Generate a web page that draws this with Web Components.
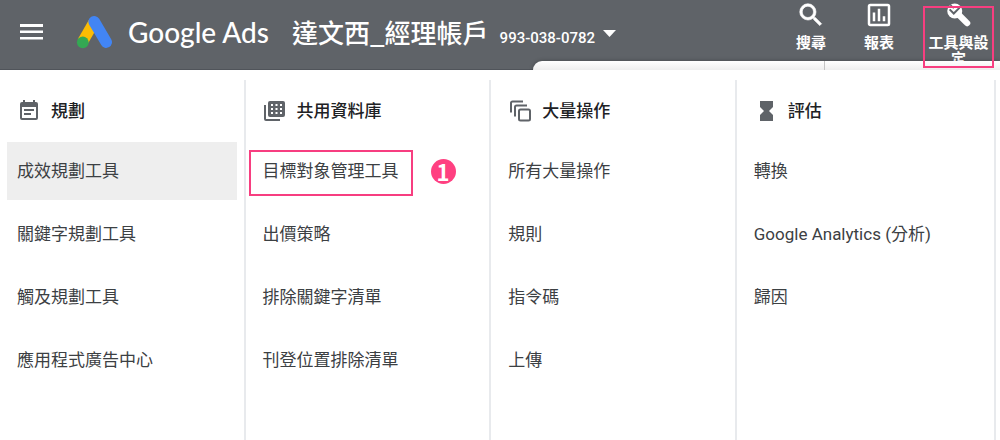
<!DOCTYPE html>
<html lang="zh-Hant">
<head>
  <meta charset="utf-8">
  <title>Google Ads</title>
  <style>
    body {
      margin: 0;
      background: #fff;
      color: #3c4043;
      font-family: Roboto, "Noto Sans CJK TC", sans-serif;
      font-size: 17px;
    }
  </style>
</head>
<body>
  <ads-page>
    <ads-header slot="header" account="達文西_經理帳戶" account-id="993-038-0782">
      <ads-tool icon="search">搜尋</ads-tool>
      <ads-tool icon="report">報表</ads-tool>
      <ads-tool icon="wrench" marked>工具與設定</ads-tool>
    </ads-header>
    <menu-column icon="plan" heading="規劃">
      <menu-item active>成效規劃工具</menu-item>
      <menu-item>關鍵字規劃工具</menu-item>
      <menu-item>觸及規劃工具</menu-item>
      <menu-item>應用程式廣告中心</menu-item>
    </menu-column>
    <menu-column icon="library" heading="共用資料庫">
      <menu-item step="1">目標對象管理工具</menu-item>
      <menu-item>出價策略</menu-item>
      <menu-item>排除關鍵字清單</menu-item>
      <menu-item>刊登位置排除清單</menu-item>
    </menu-column>
    <menu-column icon="bulk" heading="大量操作">
      <menu-item>所有大量操作</menu-item>
      <menu-item>規則</menu-item>
      <menu-item>指令碼</menu-item>
      <menu-item>上傳</menu-item>
    </menu-column>
    <menu-column icon="measure" heading="評估">
      <menu-item>轉換</menu-item>
      <menu-item>Google Analytics (分析)</menu-item>
      <menu-item>歸因</menu-item>
    </menu-column>
  </ads-page>

  <script>
    (function () {
      var icons = {
        search: '<path d="M15.5 14h-.79l-.28-.27A6.47 6.47 0 0 0 16 9.5 6.5 6.5 0 1 0 9.5 16c1.61 0 3.09-.59 4.23-1.57l.27.28v.79l5 4.99L20.49 19l-4.99-5zm-6 0a4.5 4.5 0 1 1 0-9 4.5 4.5 0 0 1 0 9z" stroke="currentColor" stroke-width=".5"/>',
        report: '<path d="M19 3H5a2 2 0 0 0-2 2v14c0 1.1.9 2 2 2h14a2 2 0 0 0 2-2V5a2 2 0 0 0-2-2zm0 16H5V5h14v14zM7 10h2v7H7zm4-3h2v10h-2zm4 6h2v4h-2z" fill-rule="evenodd"/>',
        wrench: '<path d="M9 9l9.500 9.500" stroke="currentColor" stroke-width="5" stroke-linecap="round"/><circle cx="8.6" cy="8.8" r="6"/><path d="M4.500 7.500l3.300 3.300 4.700-4.700" fill="none" stroke="#5f6368" stroke-width="1.6"/><path d="M5.200 4l2.600 2.600" stroke="#5f6368" stroke-width="1.3"/>',
        plan: '<path d="M17 10H7v2h10v-2zm2-7h-1V1h-2v2H8V1H6v2H5a2 2 0 0 0-2 2v14a2 2 0 0 0 2 2h14a2 2 0 0 0 2-2V5a2 2 0 0 0-2-2zm0 16H5V8h14v11zm-5-5H7v2h7v-2z"/>',
        library: '<path d="M1 6h2v14h14v2H3a2 2 0 0 1-2-2z"/><rect x="5" y="2" width="17" height="16" rx="2"/><path d="M8 5h2v2H8zm4.500 0h2v2h-2zm4.500 0h2v2h-2zM8 9h2v2H8zm4.500 0h2v2h-2zm4.500 0h2v2h-2zM8 13h2v2H8zm4.500 0h2v2h-2zm4.500 0h2v2h-2z" fill="#fff"/>',
        bulk: '<g fill="none" stroke="currentColor" stroke-width="2"><path d="M3 13.5V4a1.500 1.500 0 0 1 1.500-1.500H15"/><path d="M7 17.5V8a1.500 1.500 0 0 1 1.500-1.500H19"/><rect x="11" y="10.5" width="11" height="11" rx="1.5"/></g>',
        measure: '<path d="M6 2v6l4 4-4 4v6h13v-6l-4-4 4-4V2z"/>'
      };

      function svg(name) {
        return '<svg viewBox="0 0 24 24" fill="currentColor" aria-hidden="true">' + (icons[name] || '') + '</svg>';
      }

      class AdsPage extends HTMLElement {
        constructor() {
          super();
          this.attachShadow({ mode: 'open' });
          this.shadowRoot.innerHTML = `
            <style>
              :host {
                display: flex;
                flex-direction: column;
                min-height: 100vh;
              }

              nav {
                flex: 1;
                display: grid;
                grid-template-columns: 18fr 18fr 18fr 19fr;
                padding: 10px 4px 0 0;
              }
            </style>
            <slot name="header"></slot>
            <nav><slot></slot></nav>
          `;
        }
      }

      class AdsHeader extends HTMLElement {
        constructor() {
          super();
          this.attachShadow({ mode: 'open' });
          this.shadowRoot.innerHTML = `
            <style>
              :host {
                display: flex;
                align-items: flex-start;
                justify-content: space-between;
                position: relative;
                height: 70px;
                box-sizing: border-box;
                padding: 0 6px 0 20px;
                background: #5f6368;
                border-bottom: 1px solid #50545a;
                color: #fff;
              }

              button {
                padding: 0;
                border: 0;
                background: none;
                color: inherit;
                font: inherit;
                cursor: pointer;
              }

              svg {
                display: block;
              }

              .brand {
                display: flex;
                align-items: center;
                height: 64px;
              }

              .logo {
                margin-left: 33px;
              }

              .product {
                margin-left: 15px;
                font: 500 28px/40px Lato, sans-serif;
              }

              .account {
                display: flex;
                align-items: baseline;
                gap: 11px;
                margin-left: 23px;
                padding-top: 6px;
                line-height: 40px;
              }

              .name {
                font: 500 26px/40px "Noto Sans CJK TC", sans-serif;
              }

              .id {
                font-size: 15px;
                font-weight: 500;
              }

              .arrow {
                align-self: center;
                margin: 0 0 4px -3px;
              }

              .tools {
                display: flex;
              }

              /* top edge of the page lying under the menu */
              .sheet {
                position: absolute;
                top: 61px;
                bottom: -1px;
                left: 53.3%;
                right: 0;
                display: grid;
                grid-template-columns: 5fr 3fr;
                border-radius: 9px 0 0 0;
                background: linear-gradient(#fff, #eee);
                box-shadow: 0 0 4px rgba(0, 0, 0, 0.3);
                clip-path: inset(-5px 0 0 -5px);
              }

              .sheet i {
                border-right: 1px solid #c4c4c4;
              }
            </style>
            <div class="brand">
              <button type="button" aria-label="選單">
                <svg width="23" height="16" viewBox="0 0 23 16" fill="currentColor"><path d="M0 0h23v3H0zM0 6.5h23v2.500H0zM0 13h23v2.500H0z"/></svg>
              </button>
              <svg class="logo" width="37" height="34" viewBox="0 0 37 34" aria-hidden="true">
                <path d="M18 7L6.500 27" stroke="#fbbc04" stroke-width="11"/>
                <path d="M18.200 6.800l12 20.300" stroke="#4285f4" stroke-width="11.6" stroke-linecap="round"/>
                <circle cx="6.8" cy="27.3" r="5.9" fill="#34a853"/>
              </svg>
              <span class="product">Google Ads</span>
              <button type="button" class="account">
                <span class="name"></span>
                <span class="id"></span>
                <svg class="arrow" width="13" height="7" viewBox="0 0 13 7" fill="currentColor"><path d="M0 0h13L6.500 7z"/></svg>
              </button>
            </div>
            <div class="tools"><slot></slot></div>
            <div class="sheet"><i></i></div>
          `;
        }

        connectedCallback() {
          this.shadowRoot.querySelector('.name').textContent = this.getAttribute('account');
          this.shadowRoot.querySelector('.id').textContent = this.getAttribute('account-id');
        }
      }

      class AdsTool extends HTMLElement {
        constructor() {
          super();
          this.attachShadow({ mode: 'open' });
          this.shadowRoot.innerHTML = `
            <style>
              :host {
                display: block;
                position: relative;
                width: 68px;
                height: 68px;
              }

              :host([marked]) {
                width: 71px;
                margin-left: 10px;
              }

              :host([marked])::after {
                content: "";
                position: absolute;
                z-index: 1;
                inset: 6px 0 0;
                border: 2px solid #f73e80;
                pointer-events: none;
              }

              button {
                display: flex;
                flex-direction: column;
                align-items: center;
                width: 100%;
                padding: 0 4px;
                border: 0;
                background: none;
                color: #fff;
                font: 700 15px/16px "Noto Sans CJK TC", sans-serif;
                cursor: pointer;
              }

              svg {
                width: 30px;
                height: 30px;
                margin-bottom: 4px;
              }
            </style>
            <button type="button">${svg(this.getAttribute('icon'))}<span><slot></slot></span></button>
          `;
        }
      }

      class MenuColumn extends HTMLElement {
        constructor() {
          super();
          this.attachShadow({ mode: 'open' });
          this.shadowRoot.innerHTML = `
            <style>
              :host {
                display: block;
                border-right: 2px solid #e8eaed;
              }

              h2 {
                display: flex;
                align-items: center;
                gap: 10px;
                height: 62px;
                margin: 0;
                padding-left: 17px;
                color: #202124;
                font-size: 17px;
                font-weight: 500;
              }

              h2 span {
                padding-bottom: 4px;
              }

              svg {
                width: 24px;
                height: 24px;
                color: #5f6368;
              }

              .items {
                display: flex;
                flex-direction: column;
                gap: 5px;
                padding: 0 7px;
              }
            </style>
            <h2>${svg(this.getAttribute('icon'))}<span></span></h2>
            <div class="items"><slot></slot></div>
          `;
        }

        connectedCallback() {
          this.shadowRoot.querySelector('h2 span').textContent = this.getAttribute('heading');
        }
      }

      class MenuItem extends HTMLElement {
        constructor() {
          super();
          this.attachShadow({ mode: 'open' });
          this.shadowRoot.innerHTML = `
            <style>
              :host {
                display: flex;
                align-items: center;
                height: 58px;
                padding-left: 10px;
              }

              :host([active]) {
                background: #eee;
              }

              a {
                position: relative;
                color: inherit;
                line-height: 24px;
                text-decoration: none;
              }

              :host([step]) a::after {
                content: "";
                position: absolute;
                inset: -9px -14px -13px;
                border: 2px solid #f73e80;
              }

              .step {
                display: flex;
                align-items: center;
                justify-content: center;
                width: 25px;
                height: 25px;
                margin-left: 32px;
                border-radius: 50%;
                background: #ff4081;
                color: #fff;
                font: 700 22px/25px "Noto Sans CJK TC", sans-serif;
              }
            </style>
            <a href="#"><slot></slot></a>
          `;
        }

        connectedCallback() {
          if (this.hasAttribute('step')) {
            var badge = document.createElement('span');
            badge.className = 'step';
            badge.textContent = this.getAttribute('step');
            this.shadowRoot.appendChild(badge);
          }
        }
      }

      window.customElements.define('ads-page', AdsPage);
      window.customElements.define('ads-header', AdsHeader);
      window.customElements.define('ads-tool', AdsTool);
      window.customElements.define('menu-column', MenuColumn);
      window.customElements.define('menu-item', MenuItem);
    })();
  </script>
</body>
</html>
